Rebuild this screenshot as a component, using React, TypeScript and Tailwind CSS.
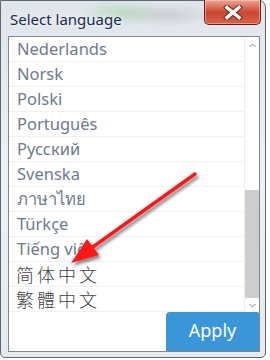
import React from 'react';

const languages = [
  'Nederlands',
  'Norsk',
  'Polski',
  'Português',
  'Русский',
  'Svenska',
  'ภาษาไทย',
  'Türkçe',
  'Tiếng việt',
];

const cjk = ['简体中文', '繁體中文'];

function CloseButton() {
  return (
    <div className="-mt-px mr-[4px] flex h-[25px] w-[57px] items-center justify-center rounded-b-[5px] border border-t-0 border-[#6e1d12] bg-gradient-to-b from-[#e9a594] via-[#cc4630] to-[#d7604a] shadow-[inset_0_0_0_1px_rgba(255,210,200,0.5)]">
      <svg width="20" height="15" viewBox="0 0 20 15">
        <path
          d="M4 2.5 L16 12.5 M16 2.5 L4 12.5"
          stroke="#5a2a22"
          strokeWidth="5.5"
          strokeLinecap="square"
        />
        <path
          d="M4 2.5 L16 12.5 M16 2.5 L4 12.5"
          stroke="#ffffff"
          strokeWidth="3.5"
          strokeLinecap="square"
        />
      </svg>
    </div>
  );
}

function Chevron({ up }: { up?: boolean }) {
  return (
    <svg width="7" height="5" viewBox="0 0 7 5">
      <polyline
        points={up ? '0.5,4 3.5,1 6.5,4' : '0.5,1 3.5,4 6.5,1'}
        fill="none"
        stroke="#8a8a8a"
        strokeWidth="1"
      />
    </svg>
  );
}

export default function App() {
  return (
    <div className="relative h-[360px] w-[270px] overflow-hidden bg-white">
      {/* Window frame */}
      <div className="flex h-[358px] w-[266px] flex-col rounded-b-[5px] rounded-tr-[7px] border border-[#5f6772] bg-gradient-to-b from-[#dfe5eb] via-[#eef1f4] to-[#e6e9ed]">
        {/* Title bar */}
        <div className="flex h-[35px] shrink-0 items-start justify-between bg-[radial-gradient(ellipse_40px_14px_at_120px_12px,rgba(150,205,150,0.45),transparent),radial-gradient(ellipse_50px_12px_at_165px_14px,rgba(160,165,170,0.35),transparent)]">
          <span className="pl-[9px] pt-[8px] font-['Noto_Sans',sans-serif] text-[15px] leading-[20px] text-[#1b2a52] [text-shadow:0_0_6px_#ffffff]">
            Select language
          </span>
          <CloseButton />
        </div>

        {/* Client area */}
        <div className="flex flex-1 pb-[5px] pl-[7px] pr-[5px]">
          <div className="flex flex-1 flex-col border border-[#80868e] bg-white">
            <div className="flex h-[275px]">
              <div className="flex flex-1 flex-col">
                {languages.map((l) => (
                  <div
                    key={l}
                    className="flex h-[25px] items-center border-b border-[#f1f1f1] pl-[8px] font-['Noto_Sans',sans-serif] text-[16.5px] text-[#6e7a8e]"
                  >
                    {l}
                  </div>
                ))}
                {cjk.map((l) => (
                  <div
                    key={l}
                    className="flex h-[25px] items-center border-b border-[#f1f1f1] pl-[7px] font-['Noto_Sans_CJK_SC',sans-serif] text-[18px] font-light tracking-[3px] text-[#444444]"
                  >
                    {l}
                  </div>
                ))}
              </div>

              {/* Scrollbar */}
              <div className="flex w-[15px] flex-col border-l border-[#ececec] bg-white">
                <div className="flex h-[17px] items-center justify-center">
                  <Chevron up />
                </div>
                <div className="flex flex-1 flex-col justify-end">
                  <div className="h-[108px] bg-[#cdcdcd]" />
                </div>
                <div className="flex h-[14px] items-center justify-center">
                  <Chevron />
                </div>
              </div>
            </div>

            <div className="flex flex-1 justify-end">
              <button className="w-[93px] rounded-tl-[4px] rounded-tr-[2px] bg-[#3a96d8] pb-[3px] font-['Noto_Sans',sans-serif] text-[18px] text-white">
                Apply
              </button>
            </div>
          </div>
        </div>
      </div>

      {/* Red annotation arrow */}
      <svg className="absolute left-0 top-0" width="270" height="360" viewBox="0 0 270 360">
        <defs>
          <filter id="sh" x="-20%" y="-20%" width="140%" height="140%">
            <feDropShadow dx="2" dy="3" stdDeviation="1.5" floodColor="#000" floodOpacity="0.45" />
          </filter>
        </defs>
        <g filter="url(#sh)">
          <line x1="195" y1="174" x2="90" y2="249" stroke="#ff1414" strokeWidth="3.5" strokeLinecap="round" />
          <polygon points="71,263 99,255 87,239" fill="#ff1414" />
        </g>
      </svg>
    </div>
  );
}
